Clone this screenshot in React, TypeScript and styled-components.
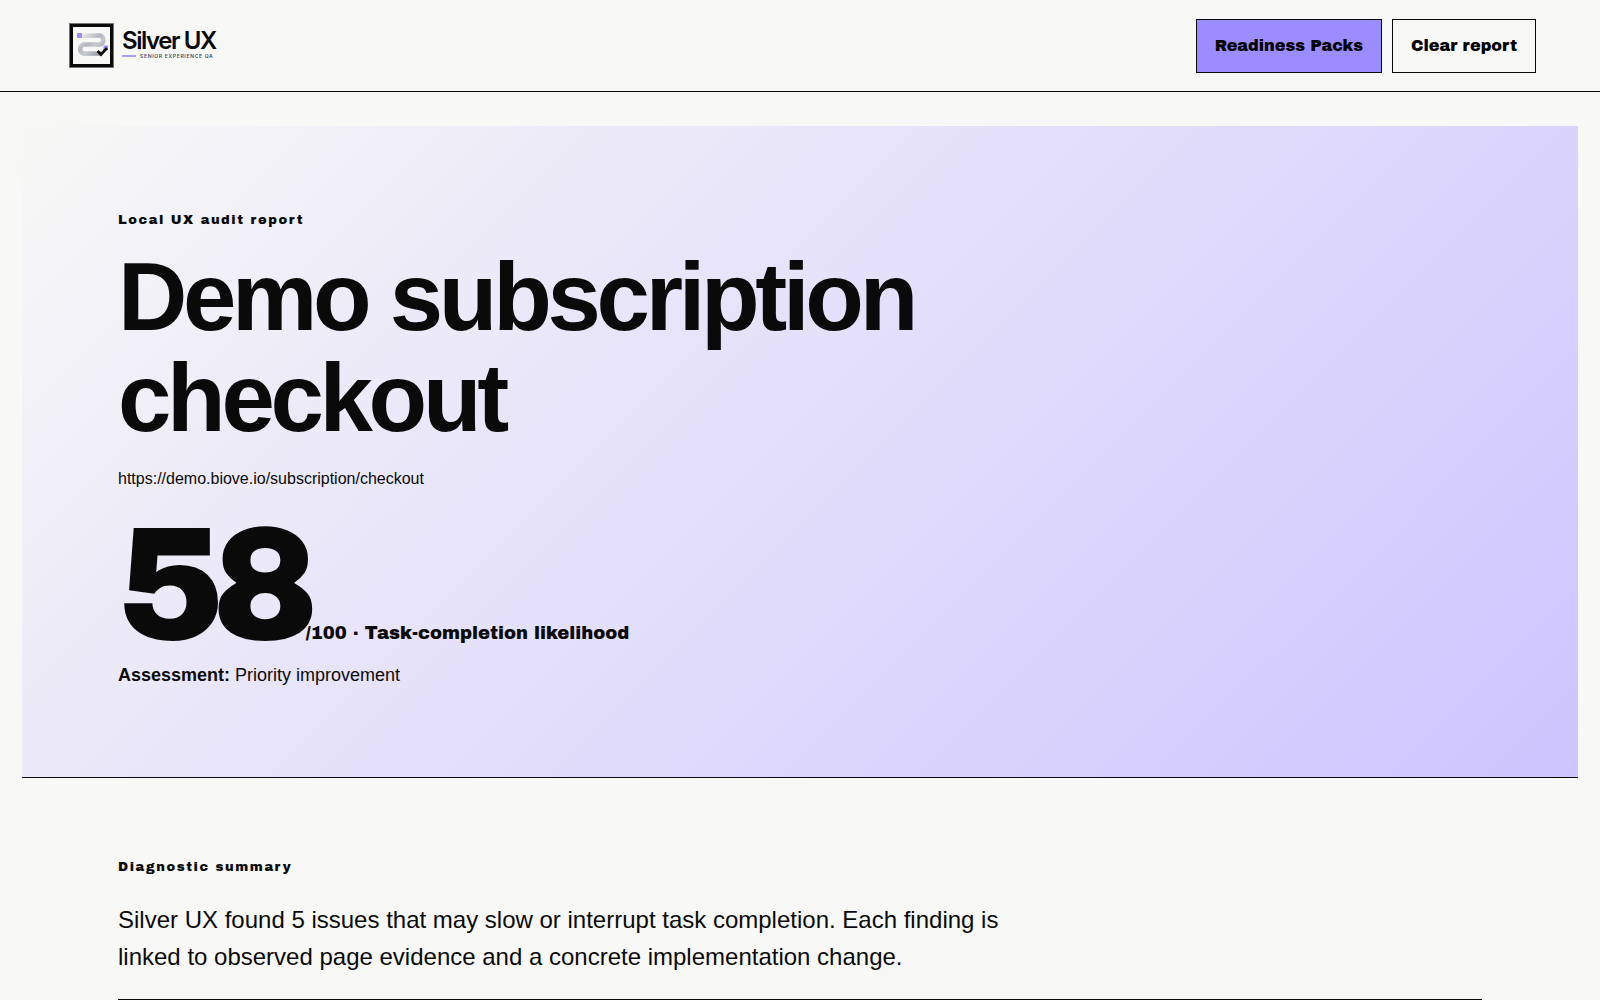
import React from "react";
import styled, { createGlobalStyle } from "styled-components";

const sans = `Arial, "Liberation Sans", sans-serif`;
const inter = `Inter, "Liberation Sans", sans-serif`;
const heavy = `"Archivo Black", Inter, "Liberation Sans", sans-serif`;
const ink = "#0a0a0a";
const paper = "#f8f8f6";

const GlobalStyle = createGlobalStyle`
  * { box-sizing: border-box; }
  body {
    margin: 0;
    background: ${paper};
    color: ${ink};
    font-family: ${sans};
    font-size: 16px;
    line-height: 24px;
  }
  h1, h2, p { margin: 0; }
`;

const Header = styled.header`
  display: flex;
  align-items: center;
  justify-content: space-between;
  padding: 19px 64px 18px 69px;
  border-bottom: 1px solid ${ink};
`;

const Brand = styled.a`
  display: flex;
  align-items: center;
  gap: 7px;
  color: ${ink};
  text-decoration: none;
`;

const BrandText = styled.span`
  display: flex;
  flex-direction: column;
  padding-bottom: 4px;
`;

const BrandName = styled.span`
  font: 600 24px/24px ${inter};
  letter-spacing: -0.06em;
`;

const Tagline = styled.span`
  display: flex;
  align-items: center;
  gap: 4px;
  color: #35506b;
  font: 600 5px/6px ${inter};
  letter-spacing: 0.14em;
  white-space: nowrap;

  &::before {
    content: "";
    width: 14px;
    height: 2px;
    background: #a99cff;
  }
`;

const Actions = styled.nav`
  display: flex;
  gap: 10px;
`;

const Button = styled.button<{ $primary?: boolean }>`
  padding: 14px 18px;
  border: 1px solid ${ink};
  border-radius: 0;
  background: ${(p) => (p.$primary ? "#9b8cff" : "transparent")};
  color: #000;
  font: 400 16px/24px ${heavy};
  cursor: pointer;
`;

const Page = styled.main`
  padding: 34px 22px 0;
`;

const Hero = styled.section`
  padding: 82px 96px 88px;
  border-bottom: 1px solid ${ink};
  background: linear-gradient(135deg, ${paper}, #cec4ff);
`;

const Eyebrow = styled.p`
  font: 400 13px/24px ${heavy};
  letter-spacing: 0.12em;
`;

const Title = styled.h1`
  max-width: 960px;
  margin-top: 14px;
  font-size: 96px;
  font-weight: 700;
  line-height: 101px;
  letter-spacing: -0.045em;
`;

const Url = styled.p`
  margin-top: 19px;
`;

const Score = styled.p`
  display: flex;
  align-items: baseline;
  margin-top: 27px;
  font: 400 18px/24px ${heavy};
`;

const ScoreValue = styled.strong`
  font-size: 160px;
  font-weight: 400;
  line-height: 136px;
  letter-spacing: -0.08em;
`;

const Assessment = styled.p`
  margin-top: 7px;
  font-size: 18px;
  line-height: 28px;
`;

const Summary = styled.section`
  margin: 0 96px;
  padding: 77px 0 24px;
  border-bottom: 1px solid ${ink};
`;

const Lead = styled.p`
  max-width: 900px;
  margin-top: 22px;
  font-size: 24px;
  line-height: 37px;
`;

function LogoMark() {
  return (
    <svg width="46" height="46" viewBox="0 0 46 46" aria-hidden="true">
      <defs>
        <linearGradient id="silver" x1="0" y1="0" x2="1" y2="1">
          <stop offset="0" stopColor="#eeeff1" />
          <stop offset="0.4" stopColor="#b4b8be" />
          <stop offset="0.6" stopColor="#c6c9ce" />
          <stop offset="1" stopColor="#8c919a" />
        </linearGradient>
      </defs>
      <rect width="45" height="45" fill="#777" />
      <rect x="1" y="1" width="43" height="43" fill={ink} />
      <rect x="4" y="4" width="37" height="37" fill={paper} />
      <path
        d="M11 12.500H31A4.700 4.700 0 0 1 31 21.500H14.500A4.700 4.700 0 0 0 14.500 30.500H31"
        fill="none"
        stroke="url(#silver)"
        strokeWidth="4.500"
        strokeLinecap="round"
      />
      <rect x="8" y="10" width="5" height="5" fill="#9b8cff" />
      <rect x="34.500" y="22.500" width="4.500" height="4.500" fill="#9b8cff" />
      <path d="M28.500 28L32 31.500L38 25" fill="none" stroke={ink} strokeWidth="2.600" />
    </svg>
  );
}

export default function App() {
  return (
    <>
      <GlobalStyle />
      <Header>
        <Brand href="#" aria-label="Silver UX">
          <LogoMark />
          <BrandText>
            <BrandName>Silver UX</BrandName>
            <Tagline>SENIOR EXPERIENCE QA</Tagline>
          </BrandText>
        </Brand>
        <Actions>
          <Button type="button" $primary>Readiness Packs</Button>
          <Button type="button">Clear report</Button>
        </Actions>
      </Header>
      <Page>
        <Hero>
          <Eyebrow>Local UX audit report</Eyebrow>
          <Title>Demo subscription checkout</Title>
          <Url>https://demo.biove.io/subscription/checkout</Url>
          <Score>
            <ScoreValue>58</ScoreValue>
            <span>/100 · Task-completion likelihood</span>
          </Score>
          <Assessment>
            <strong>Assessment:</strong> Priority improvement
          </Assessment>
        </Hero>
        <Summary>
          <Eyebrow as="h2">Diagnostic summary</Eyebrow>
          <Lead>
            Silver UX found 5 issues that may slow or interrupt task completion. Each finding is
            linked to observed page evidence and a concrete implementation change.
          </Lead>
        </Summary>
      </Page>
    </>
  );
}
